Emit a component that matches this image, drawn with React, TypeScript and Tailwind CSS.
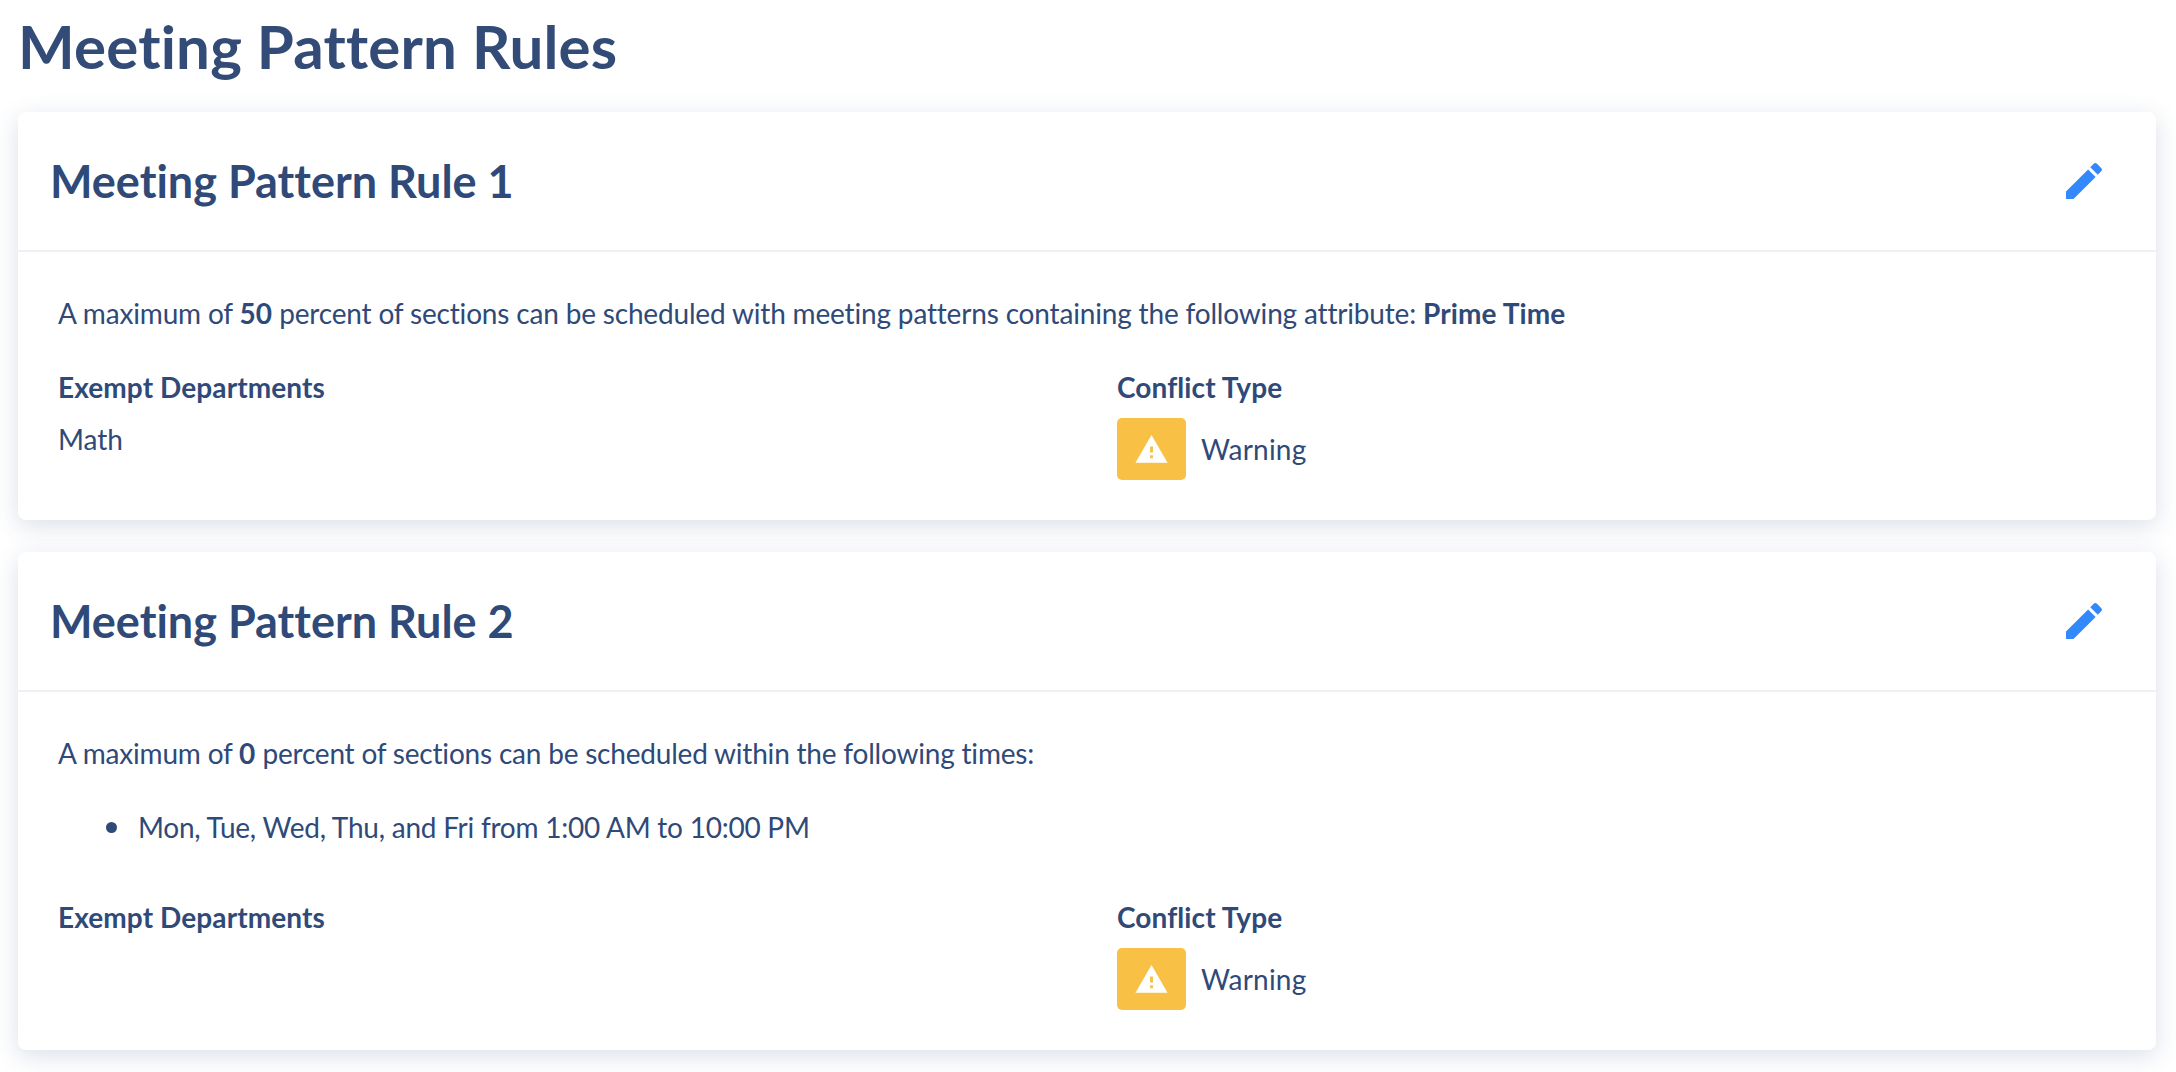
function Pencil() {
  return (
    <svg width="48" height="48" viewBox="0 0 24 24" fill="#3388fb" className="block">
      <path d="M3 17.25V21h3.75L17.81 9.94l-3.75-3.75L3 17.25zM20.71 7.04a1 1 0 0 0 0-1.41l-2.34-2.34a1 1 0 0 0-1.41 0l-1.83 1.83 3.75 3.75 1.83-1.83z" />
    </svg>
  );
}

function Warn() {
  return (
    <div className="w-[69px] h-[62px] rounded-[5px] bg-[#f8c145] flex items-center justify-center">
      <svg width="35" height="35" viewBox="0 0 24 24" fill="#ffffff">
        <path d="M1 21h22L12 2 1 21zm12-3h-2v-2h2v2zm0-4h-2v-4h2v4z" />
      </svg>
    </div>
  );
}

function Rule({ n, children, dept }: { n: number; children: React.ReactNode; dept?: string }) {
  return (
    <section className="bg-white rounded-[8px] shadow-[0_6px_24px_rgba(50,75,130,0.18)]">
      <header className="h-[140px] border-b-2 border-[#eef0f4] pl-[32px] pr-[48px] flex items-center justify-between">
        <h2 className="text-[45px] leading-[56px] font-bold">Meeting Pattern Rule {n}</h2>
        <Pencil />
      </header>
      <div className="px-[40px] pt-[43px] pb-[40px]">
        {children}
        <div className="grid grid-cols-[1059px_1fr] mt-[38px]">
          <div>
            <div className="text-[28px] leading-[36px] font-bold tracking-[0.1px]">Exempt Departments</div>
            {dept ? <div className="mt-[16px] text-[28px] leading-[36px]">{dept}</div> : null}
          </div>
          <div>
            <div className="text-[28px] leading-[36px] font-bold tracking-[0.1px]">Conflict Type</div>
            <div className="mt-[13px] flex items-center gap-[15px]">
              <Warn />
              <span className="text-[28px] leading-[36px] tracking-[0.2px]">Warning</span>
            </div>
          </div>
        </div>
      </div>
    </section>
  );
}

export default function App() {
  return (
    <main className="min-h-screen bg-white pl-[18px] pr-[20px] text-[#2f4a78] font-['Lato','Noto_Sans',sans-serif] [font-variant-ligatures:none]">
      <h1 className="text-[60px] leading-[72px] pt-[10px] pb-[30px] font-bold tracking-[0.2px] text-[#334b77]">Meeting Pattern Rules</h1>
      <div className="flex flex-col gap-[32px]">
        <Rule n={1} dept="Math">
          <p className="text-[28px] leading-[36px] tracking-[-0.17px]">
            A maximum of <b className="tracking-[0.1px]">50</b> percent of sections can be scheduled with meeting patterns containing the following attribute: <b className="tracking-[0.1px]">Prime Time</b>
          </p>
        </Rule>
        <Rule n={2}>
          <p className="text-[28px] leading-[36px] tracking-[-0.2px]">
            A maximum of <b className="tracking-[0.1px]">0</b> percent of sections can be scheduled within the following times:
          </p>
          <ul className="pl-[48px] mt-[38px] mb-[54px]">
            <li className="flex items-center gap-[21px] text-[28px] leading-[36px] tracking-[-0.24px]">
              <span className="w-[11px] h-[11px] rounded-full bg-[#2f4a78]" />
              Mon, Tue, Wed, Thu, and Fri from 1:00 AM to 10:00 PM
            </li>
          </ul>
        </Rule>
      </div>
    </main>
  );
}
